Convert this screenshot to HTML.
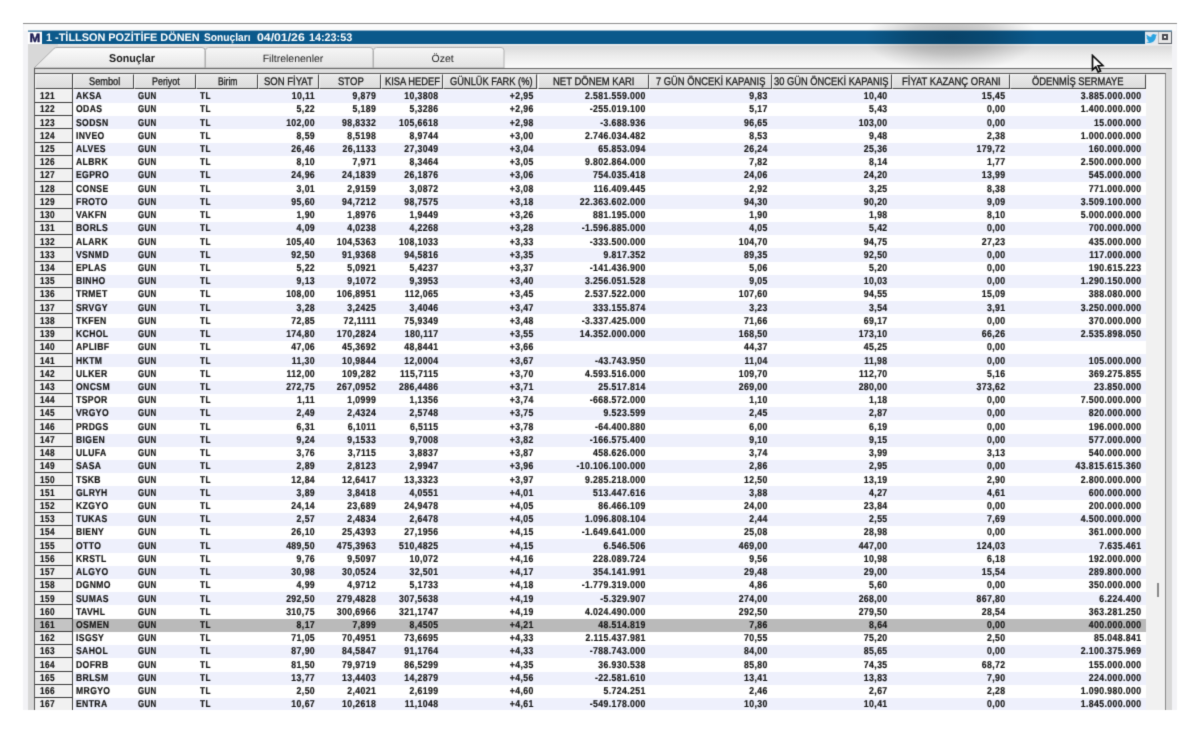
<!DOCTYPE html>
<html lang="tr"><head><meta charset="utf-8"><title>TİLLSON POZİTİFE DÖNEN Sonuçları</title>
<style>

html,body{margin:0;padding:0;background:#fff;}
body{width:1200px;height:733px;position:relative;overflow:hidden;font-family:"Liberation Sans",sans-serif;text-rendering:geometricPrecision;}
#app{position:absolute;left:0;top:0;width:1200px;height:733px;overflow:hidden;background:#fff;filter:url(#soft);}
.abs{position:absolute;}
.r{position:absolute;left:73px;width:1073px;}
.r.a{background:linear-gradient(90deg,#fbfbff 0,#fbfbff 1.500px,#eef0fc 1.500px);}
.r.b{background:#ffffff;}
.r.sel{background:#bababa;}
.c{position:absolute;top:0;height:100%;font-weight:bold;font-size:10px;color:#141414;-webkit-text-stroke:0.2px #141414;letter-spacing:0.45px;white-space:nowrap;line-height:13.24px;}
.r.d1 .c{top:1px;}
.n.d1 span{top:0.5px;}
.c.l{text-align:left;transform:scaleX(0.86);transform-origin:0 50%;}
.c.l.g{transform:scaleX(0.79);}
.c.l.t{transform:scaleX(0.82);}
.c.rt{text-align:right;transform:scaleX(0.87);transform-origin:100% 50%;}
.n{position:absolute;left:35px;width:37px;background:#f1f1f1;border-bottom:1px solid #363636;box-sizing:border-box;font-weight:bold;font-size:10px;color:#141414;-webkit-text-stroke:0.2px #141414;letter-spacing:0.45px;line-height:13.24px;padding-left:4.8px;}
.n span{display:inline-block;position:relative;top:-0.5px;transform:scaleX(0.825);transform-origin:0 50%;}
.n.sel{background:#c4c4c4;}
.h{position:absolute;top:74px;height:15px;box-sizing:border-box;background:linear-gradient(#e9e9e9,#dcdcdc);border-right:1px solid #444;border-bottom:1px solid #444;border-top:1px solid #fafafa;border-left:1px solid #fafafa;font-size:11px;color:#222;text-align:left;line-height:14px;white-space:nowrap;overflow:hidden;}
.h span{position:absolute;top:-0.2px;-webkit-text-stroke:0.3px #181818;color:#181818;left:0;white-space:nowrap;transform-origin:0 50%;}

</style></head><body>
<svg width="0" height="0" style="position:absolute;left:0;top:0"><filter id="soft" x="0" y="0" width="100%" height="100%" color-interpolation-filters="sRGB"><feConvolveMatrix order="3" kernelMatrix="0.0169 0.0962 0.0169 0.0962 0.5476 0.0962 0.0169 0.0962 0.0169" divisor="1" edgeMode="duplicate" preserveAlpha="true"/></filter></svg>
<div id="app">
<div class="abs" style="left:23px;top:23px;width:1154px;height:688px;background:#f3f3f6;"></div>
<div class="abs" style="left:23px;top:23px;width:1154px;height:1px;background:#8c8c8c;"></div>
<div class="abs" style="left:24px;top:24px;width:1152px;height:7px;background:#fafafa;"></div>
<div class="abs" style="left:28px;top:44px;width:1144px;height:667px;background:#d8d8d8;"></div>
<div class="abs" style="left:28px;top:44px;width:1144px;height:24px;background:linear-gradient(#d6d6d6,#ececec 50%,#fafafa);"></div>
<div class="abs" style="left:28px;top:44px;width:1144px;height:2px;background:linear-gradient(#f0f0f0,#e2e2e2);"></div>
<div class="abs" style="left:28px;top:31px;width:1144px;height:13px;background:#e4e8ee;"></div>
<div class="abs" style="left:42px;top:31px;width:1103px;height:13px;background:#0b598b;"></div>
<div class="abs" style="left:28px;top:30px;width:1144px;height:1px;background:#8fb1c8;"></div>
<div class="abs" style="left:28px;top:31px;width:14px;height:13px;background:#fff;"></div>
<div class="abs" style="left:28px;top:31px;width:14px;height:1px;background:#5d8fb0;"></div>
<div class="abs" style="left:28px;top:31px;width:14px;height:13px;line-height:15px;text-align:center;font-weight:bold;font-size:12px;color:#1b1b52;-webkit-text-stroke:0.4px #1b1b52;transform:scaleX(1.08);">M</div>
<div class="abs" id="title" style="left:0;top:31px;height:13px;width:400px;line-height:14px;font-weight:bold;font-size:11px;color:#fff;white-space:pre;"><span style="position:absolute;top:0;left:45.60px;transform:scaleX(0.990);transform-origin:0 50%;">1 -TİLLSON POZİTİFE DÖNEN</span> <span style="position:absolute;top:0;left:203.50px;transform:scaleX(0.928);transform-origin:0 50%;">Sonuçları</span> <span style="position:absolute;top:0;left:257.10px;transform:scaleX(1.114);transform-origin:0 50%;">04/01/26</span> <span style="position:absolute;top:0;left:308.60px;transform:scaleX(0.980);transform-origin:0 50%;">14:23:53</span> </div>
<svg class="abs" style="left:1146px;top:33.500px;" width="11" height="9.200" viewBox="0 0 24 20"><path fill="#2aa3e0" d="M24 2.4c-.9.4-1.800.7-2.800.8 1-.6 1.800-1.600 2.200-2.700-1 .6-2 1-3.100 1.200C19.400.7 18.100 0 16.600 0c-2.700 0-4.900 2.200-4.900 4.900 0 .4 0 .8.100 1.100C7.700 5.800 4.100 3.900 1.700.9 1.200 1.700 1 2.500 1 3.400c0 1.700.9 3.200 2.200 4.100-.8 0-1.600-.2-2.200-.6v.1c0 2.400 1.700 4.400 3.900 4.800-.4.100-.8.200-1.300.2-.3 0-.6 0-.9-.1.600 2 2.400 3.400 4.600 3.400-1.700 1.300-3.800 2.100-6.100 2.100-.4 0-.8 0-1.200-.1 2.200 1.400 4.800 2.200 7.500 2.200 9.100 0 14-7.500 14-14v-.6c1-.7 1.800-1.600 2.500-2.500z"/></svg>
<div class="abs" style="left:1145px;top:31px;width:27px;height:1px;background:#5d8199;"></div>
<div class="abs" style="left:1158px;top:32px;width:14px;height:12px;background:#e6e6e6;border-right:1px solid #5a6068;border-bottom:1px solid #5a6068;border-left:1px solid #b8b8b8;box-sizing:border-box;"></div>
<div class="abs" style="left:1162px;top:34px;width:6px;height:6px;border:2px solid #4a4a50;box-sizing:border-box;background:#fff;"></div>
<svg class="abs" style="left:28px;top:44px;" width="1144" height="26" viewBox="0 0 1144 26">
<defs><linearGradient id="tg" x1="0" y1="0" x2="0" y2="1"><stop offset="0" stop-color="#fbfbfb"/><stop offset="1" stop-color="#e6e6e6"/></linearGradient><linearGradient id="tg2" x1="0" y1="0" x2="0" y2="1"><stop offset="0" stop-color="#f6f6f6"/><stop offset="1" stop-color="#e2e2e2"/></linearGradient></defs>
<path d="M0 0 L30 0 L30 4 L26 4 L6 24 L0 24 Z" fill="#d8d8d8"/>
<path d="M6 24 L26 4.500 Q27 3.500 29 3.500 L174 3.500 Q177 3.500 177 6.500 L177 24 Z" fill="url(#tg)" stroke="#a8a8a8" stroke-width="1"/>
<path d="M177.500 24 L177.500 6.500 Q177.500 3.500 180.500 3.500 L342 3.500 Q345 3.500 345 6.500 L345 24 Z" fill="url(#tg2)" stroke="#b0b0b0" stroke-width="1"/>
<path d="M345.500 24 L345.500 6.500 Q345.500 3.500 348.500 3.500 L473 3.500 Q476 3.500 476 6.500 L476 24 Z" fill="url(#tg2)" stroke="#b0b0b0" stroke-width="1"/>
<text x="104" y="18" text-anchor="middle" font-family="Liberation Sans, sans-serif" font-weight="bold" font-size="11.500" fill="#1a1a1a" textLength="45.800" lengthAdjust="spacingAndGlyphs">Sonuçlar</text>
<text x="265" y="18" text-anchor="middle" font-family="Liberation Sans, sans-serif" font-size="10.500" fill="#1e1e1e">Filtrelenenler</text>
<text x="414.7" y="18" text-anchor="middle" font-family="Liberation Sans, sans-serif" font-size="10.500" fill="#1e1e1e">Özet</text>
</svg>
<div class="abs" style="left:34px;top:68px;width:1138px;height:1px;background:#666;"></div>
<div class="abs" style="left:34px;top:69px;width:1132px;height:4px;background:#dedede;"></div>
<div class="abs" style="left:34px;top:68px;width:1px;height:6px;background:#555;"></div>
<div class="abs" style="left:34px;top:73px;width:1132px;height:640px;background:#f7f7f7;border-left:1px solid #555;border-top:1px solid #555;border-right:1px solid #888;box-sizing:border-box;"></div>
<div class="abs" style="left:35px;top:74px;width:1111px;height:15px;background:#e2e2e2;"></div>
<div class="abs" style="left:73px;top:89px;width:1073px;height:624px;background:#fff;"></div>
<div class="h" id="h0" style="left:35.00px;width:37.50px;"></div>
<div class="h" id="h1" style="left:72.50px;width:61.75px;"><span style="left:15.25px;transform:scaleX(0.838);">Sembol</span></div>
<div class="h" id="h2" style="left:134.25px;width:61.75px;"><span style="left:16.50px;transform:scaleX(0.810);">Periyot</span></div>
<div class="h" id="h3" style="left:196.00px;width:61.70px;"><span style="left:20.50px;transform:scaleX(0.778);">Birim</span></div>
<div class="h" id="h4" style="left:257.70px;width:61.60px;"><span style="left:5.05px;transform:scaleX(0.864);">SON FİYAT</span></div>
<div class="h" id="h5" style="left:319.30px;width:61.70px;"><span style="left:17.70px;transform:scaleX(0.865);">STOP</span></div>
<div class="h" id="h6" style="left:381.00px;width:61.90px;"><span style="left:2.50px;transform:scaleX(0.849);">KISA HEDEF</span></div>
<div class="h" id="h7" style="left:442.90px;width:94.60px;"><span style="left:6.10px;transform:scaleX(0.844);">GÜNLÜK FARK (%)</span></div>
<div class="h" id="h8" style="left:537.50px;width:111.00px;"><span style="left:14.50px;transform:scaleX(0.862);">NET DÖNEM KARI</span></div>
<div class="h" id="h9" style="left:648.50px;width:123.20px;"><span style="left:6.00px;transform:scaleX(0.850);">7 GÜN ÖNCEKİ KAPANIŞ</span></div>
<div class="h" id="h10" style="left:771.70px;width:120.10px;"><span style="left:1.55px;transform:scaleX(0.849);">30 GÜN ÖNCEKİ KAPANIŞ</span></div>
<div class="h" id="h11" style="left:891.80px;width:118.00px;"><span style="left:9.10px;transform:scaleX(0.859);">FİYAT KAZANÇ ORANI</span></div>
<div class="h" id="h12" style="left:1009.80px;width:136.00px;"><span style="left:21.70px;transform:scaleX(0.852);">ÖDENMİŞ SERMAYE</span></div>
<div class="n" style="top:90.00px;height:13.00px;"><span>121</span></div>
<div class="r a" style="top:90.00px;height:13.00px;"><div class="c l" style="left:3.10px;width:58.15px;">AKSA</div><div class="c l g" style="left:64.85px;width:58.15px;">GUN</div><div class="c l t" style="left:126.60px;width:58.10px;">TL</div><div class="c rt" style="left:184.70px;width:57.10px;">10,11</div><div class="c rt" style="left:246.30px;width:57.20px;">9,879</div><div class="c rt" style="left:308.00px;width:57.40px;">10,3808</div><div class="c rt" style="left:369.90px;width:90.80px;">+2,95</div><div class="c rt" style="left:464.50px;width:107.70px;">2.581.559.000</div><div class="c rt" style="left:575.50px;width:118.70px;">9,83</div><div class="c rt" style="left:698.70px;width:115.60px;">10,40</div><div class="c rt" style="left:818.80px;width:113.50px;">15,45</div><div class="c rt" style="left:936.80px;width:131.50px;">3.885.000.000</div></div>
<div class="n" style="top:103.00px;height:13.00px;"><span>122</span></div>
<div class="r b" style="top:103.00px;height:13.00px;"><div class="c l" style="left:3.10px;width:58.15px;">ODAS</div><div class="c l g" style="left:64.85px;width:58.15px;">GUN</div><div class="c l t" style="left:126.60px;width:58.10px;">TL</div><div class="c rt" style="left:184.70px;width:57.10px;">5,22</div><div class="c rt" style="left:246.30px;width:57.20px;">5,189</div><div class="c rt" style="left:308.00px;width:57.40px;">5,3286</div><div class="c rt" style="left:369.90px;width:90.80px;">+2,96</div><div class="c rt" style="left:464.50px;width:107.70px;">-255.019.100</div><div class="c rt" style="left:575.50px;width:118.70px;">5,17</div><div class="c rt" style="left:698.70px;width:115.60px;">5,43</div><div class="c rt" style="left:818.80px;width:113.50px;">0,00</div><div class="c rt" style="left:936.80px;width:131.50px;">1.400.000.000</div></div>
<div class="n d1" style="top:116.00px;height:13.00px;"><span>123</span></div>
<div class="r a d1" style="top:116.00px;height:13.00px;"><div class="c l" style="left:3.10px;width:58.15px;">SODSN</div><div class="c l g" style="left:64.85px;width:58.15px;">GUN</div><div class="c l t" style="left:126.60px;width:58.10px;">TL</div><div class="c rt" style="left:184.70px;width:57.10px;">102,00</div><div class="c rt" style="left:246.30px;width:57.20px;">98,8332</div><div class="c rt" style="left:308.00px;width:57.40px;">105,6618</div><div class="c rt" style="left:369.90px;width:90.80px;">+2,98</div><div class="c rt" style="left:464.50px;width:107.70px;">-3.688.936</div><div class="c rt" style="left:575.50px;width:118.70px;">96,65</div><div class="c rt" style="left:698.70px;width:115.60px;">103,00</div><div class="c rt" style="left:818.80px;width:113.50px;">0,00</div><div class="c rt" style="left:936.80px;width:131.50px;">15.000.000</div></div>
<div class="n d1" style="top:129.00px;height:14.00px;"><span>124</span></div>
<div class="r b d1" style="top:129.00px;height:14.00px;"><div class="c l" style="left:3.10px;width:58.15px;">INVEO</div><div class="c l g" style="left:64.85px;width:58.15px;">GUN</div><div class="c l t" style="left:126.60px;width:58.10px;">TL</div><div class="c rt" style="left:184.70px;width:57.10px;">8,59</div><div class="c rt" style="left:246.30px;width:57.20px;">8,5198</div><div class="c rt" style="left:308.00px;width:57.40px;">8,9744</div><div class="c rt" style="left:369.90px;width:90.80px;">+3,00</div><div class="c rt" style="left:464.50px;width:107.70px;">2.746.034.482</div><div class="c rt" style="left:575.50px;width:118.70px;">8,53</div><div class="c rt" style="left:698.70px;width:115.60px;">9,48</div><div class="c rt" style="left:818.80px;width:113.50px;">2,38</div><div class="c rt" style="left:936.80px;width:131.50px;">1.000.000.000</div></div>
<div class="n" style="top:143.00px;height:13.00px;"><span>125</span></div>
<div class="r a" style="top:143.00px;height:13.00px;"><div class="c l" style="left:3.10px;width:58.15px;">ALVES</div><div class="c l g" style="left:64.85px;width:58.15px;">GUN</div><div class="c l t" style="left:126.60px;width:58.10px;">TL</div><div class="c rt" style="left:184.70px;width:57.10px;">26,46</div><div class="c rt" style="left:246.30px;width:57.20px;">26,1133</div><div class="c rt" style="left:308.00px;width:57.40px;">27,3049</div><div class="c rt" style="left:369.90px;width:90.80px;">+3,04</div><div class="c rt" style="left:464.50px;width:107.70px;">65.853.094</div><div class="c rt" style="left:575.50px;width:118.70px;">26,24</div><div class="c rt" style="left:698.70px;width:115.60px;">25,36</div><div class="c rt" style="left:818.80px;width:113.50px;">179,72</div><div class="c rt" style="left:936.80px;width:131.50px;">160.000.000</div></div>
<div class="n" style="top:156.00px;height:13.00px;"><span>126</span></div>
<div class="r b" style="top:156.00px;height:13.00px;"><div class="c l" style="left:3.10px;width:58.15px;">ALBRK</div><div class="c l g" style="left:64.85px;width:58.15px;">GUN</div><div class="c l t" style="left:126.60px;width:58.10px;">TL</div><div class="c rt" style="left:184.70px;width:57.10px;">8,10</div><div class="c rt" style="left:246.30px;width:57.20px;">7,971</div><div class="c rt" style="left:308.00px;width:57.40px;">8,3464</div><div class="c rt" style="left:369.90px;width:90.80px;">+3,05</div><div class="c rt" style="left:464.50px;width:107.70px;">9.802.864.000</div><div class="c rt" style="left:575.50px;width:118.70px;">7,82</div><div class="c rt" style="left:698.70px;width:115.60px;">8,14</div><div class="c rt" style="left:818.80px;width:113.50px;">1,77</div><div class="c rt" style="left:936.80px;width:131.50px;">2.500.000.000</div></div>
<div class="n" style="top:169.00px;height:13.00px;"><span>127</span></div>
<div class="r a" style="top:169.00px;height:13.00px;"><div class="c l" style="left:3.10px;width:58.15px;">EGPRO</div><div class="c l g" style="left:64.85px;width:58.15px;">GUN</div><div class="c l t" style="left:126.60px;width:58.10px;">TL</div><div class="c rt" style="left:184.70px;width:57.10px;">24,96</div><div class="c rt" style="left:246.30px;width:57.20px;">24,1839</div><div class="c rt" style="left:308.00px;width:57.40px;">26,1876</div><div class="c rt" style="left:369.90px;width:90.80px;">+3,06</div><div class="c rt" style="left:464.50px;width:107.70px;">754.035.418</div><div class="c rt" style="left:575.50px;width:118.70px;">24,06</div><div class="c rt" style="left:698.70px;width:115.60px;">24,20</div><div class="c rt" style="left:818.80px;width:113.50px;">13,99</div><div class="c rt" style="left:936.80px;width:131.50px;">545.000.000</div></div>
<div class="n d1" style="top:182.00px;height:13.00px;"><span>128</span></div>
<div class="r b d1" style="top:182.00px;height:13.00px;"><div class="c l" style="left:3.10px;width:58.15px;">CONSE</div><div class="c l g" style="left:64.85px;width:58.15px;">GUN</div><div class="c l t" style="left:126.60px;width:58.10px;">TL</div><div class="c rt" style="left:184.70px;width:57.10px;">3,01</div><div class="c rt" style="left:246.30px;width:57.20px;">2,9159</div><div class="c rt" style="left:308.00px;width:57.40px;">3,0872</div><div class="c rt" style="left:369.90px;width:90.80px;">+3,08</div><div class="c rt" style="left:464.50px;width:107.70px;">116.409.445</div><div class="c rt" style="left:575.50px;width:118.70px;">2,92</div><div class="c rt" style="left:698.70px;width:115.60px;">3,25</div><div class="c rt" style="left:818.80px;width:113.50px;">8,38</div><div class="c rt" style="left:936.80px;width:131.50px;">771.000.000</div></div>
<div class="n d1" style="top:195.00px;height:14.00px;"><span>129</span></div>
<div class="r a d1" style="top:195.00px;height:14.00px;"><div class="c l" style="left:3.10px;width:58.15px;">FROTO</div><div class="c l g" style="left:64.85px;width:58.15px;">GUN</div><div class="c l t" style="left:126.60px;width:58.10px;">TL</div><div class="c rt" style="left:184.70px;width:57.10px;">95,60</div><div class="c rt" style="left:246.30px;width:57.20px;">94,7212</div><div class="c rt" style="left:308.00px;width:57.40px;">98,7575</div><div class="c rt" style="left:369.90px;width:90.80px;">+3,18</div><div class="c rt" style="left:464.50px;width:107.70px;">22.363.602.000</div><div class="c rt" style="left:575.50px;width:118.70px;">94,30</div><div class="c rt" style="left:698.70px;width:115.60px;">90,20</div><div class="c rt" style="left:818.80px;width:113.50px;">9,09</div><div class="c rt" style="left:936.80px;width:131.50px;">3.509.100.000</div></div>
<div class="n" style="top:209.00px;height:13.00px;"><span>130</span></div>
<div class="r b" style="top:209.00px;height:13.00px;"><div class="c l" style="left:3.10px;width:58.15px;">VAKFN</div><div class="c l g" style="left:64.85px;width:58.15px;">GUN</div><div class="c l t" style="left:126.60px;width:58.10px;">TL</div><div class="c rt" style="left:184.70px;width:57.10px;">1,90</div><div class="c rt" style="left:246.30px;width:57.20px;">1,8976</div><div class="c rt" style="left:308.00px;width:57.40px;">1,9449</div><div class="c rt" style="left:369.90px;width:90.80px;">+3,26</div><div class="c rt" style="left:464.50px;width:107.70px;">881.195.000</div><div class="c rt" style="left:575.50px;width:118.70px;">1,90</div><div class="c rt" style="left:698.70px;width:115.60px;">1,98</div><div class="c rt" style="left:818.80px;width:113.50px;">8,10</div><div class="c rt" style="left:936.80px;width:131.50px;">5.000.000.000</div></div>
<div class="n" style="top:222.00px;height:13.00px;"><span>131</span></div>
<div class="r a" style="top:222.00px;height:13.00px;"><div class="c l" style="left:3.10px;width:58.15px;">BORLS</div><div class="c l g" style="left:64.85px;width:58.15px;">GUN</div><div class="c l t" style="left:126.60px;width:58.10px;">TL</div><div class="c rt" style="left:184.70px;width:57.10px;">4,09</div><div class="c rt" style="left:246.30px;width:57.20px;">4,0238</div><div class="c rt" style="left:308.00px;width:57.40px;">4,2268</div><div class="c rt" style="left:369.90px;width:90.80px;">+3,28</div><div class="c rt" style="left:464.50px;width:107.70px;">-1.596.885.000</div><div class="c rt" style="left:575.50px;width:118.70px;">4,05</div><div class="c rt" style="left:698.70px;width:115.60px;">5,42</div><div class="c rt" style="left:818.80px;width:113.50px;">0,00</div><div class="c rt" style="left:936.80px;width:131.50px;">700.000.000</div></div>
<div class="n d1" style="top:235.00px;height:13.00px;"><span>132</span></div>
<div class="r b d1" style="top:235.00px;height:13.00px;"><div class="c l" style="left:3.10px;width:58.15px;">ALARK</div><div class="c l g" style="left:64.85px;width:58.15px;">GUN</div><div class="c l t" style="left:126.60px;width:58.10px;">TL</div><div class="c rt" style="left:184.70px;width:57.10px;">105,40</div><div class="c rt" style="left:246.30px;width:57.20px;">104,5363</div><div class="c rt" style="left:308.00px;width:57.40px;">108,1033</div><div class="c rt" style="left:369.90px;width:90.80px;">+3,33</div><div class="c rt" style="left:464.50px;width:107.70px;">-333.500.000</div><div class="c rt" style="left:575.50px;width:118.70px;">104,70</div><div class="c rt" style="left:698.70px;width:115.60px;">94,75</div><div class="c rt" style="left:818.80px;width:113.50px;">27,23</div><div class="c rt" style="left:936.80px;width:131.50px;">435.000.000</div></div>
<div class="n d1" style="top:248.00px;height:14.00px;"><span>133</span></div>
<div class="r a d1" style="top:248.00px;height:14.00px;"><div class="c l" style="left:3.10px;width:58.15px;">VSNMD</div><div class="c l g" style="left:64.85px;width:58.15px;">GUN</div><div class="c l t" style="left:126.60px;width:58.10px;">TL</div><div class="c rt" style="left:184.70px;width:57.10px;">92,50</div><div class="c rt" style="left:246.30px;width:57.20px;">91,9368</div><div class="c rt" style="left:308.00px;width:57.40px;">94,5816</div><div class="c rt" style="left:369.90px;width:90.80px;">+3,35</div><div class="c rt" style="left:464.50px;width:107.70px;">9.817.352</div><div class="c rt" style="left:575.50px;width:118.70px;">89,35</div><div class="c rt" style="left:698.70px;width:115.60px;">92,50</div><div class="c rt" style="left:818.80px;width:113.50px;">0,00</div><div class="c rt" style="left:936.80px;width:131.50px;">117.000.000</div></div>
<div class="n" style="top:262.00px;height:13.00px;"><span>134</span></div>
<div class="r b" style="top:262.00px;height:13.00px;"><div class="c l" style="left:3.10px;width:58.15px;">EPLAS</div><div class="c l g" style="left:64.85px;width:58.15px;">GUN</div><div class="c l t" style="left:126.60px;width:58.10px;">TL</div><div class="c rt" style="left:184.70px;width:57.10px;">5,22</div><div class="c rt" style="left:246.30px;width:57.20px;">5,0921</div><div class="c rt" style="left:308.00px;width:57.40px;">5,4237</div><div class="c rt" style="left:369.90px;width:90.80px;">+3,37</div><div class="c rt" style="left:464.50px;width:107.70px;">-141.436.900</div><div class="c rt" style="left:575.50px;width:118.70px;">5,06</div><div class="c rt" style="left:698.70px;width:115.60px;">5,20</div><div class="c rt" style="left:818.80px;width:113.50px;">0,00</div><div class="c rt" style="left:936.80px;width:131.50px;">190.615.223</div></div>
<div class="n" style="top:275.00px;height:13.00px;"><span>135</span></div>
<div class="r a" style="top:275.00px;height:13.00px;"><div class="c l" style="left:3.10px;width:58.15px;">BINHO</div><div class="c l g" style="left:64.85px;width:58.15px;">GUN</div><div class="c l t" style="left:126.60px;width:58.10px;">TL</div><div class="c rt" style="left:184.70px;width:57.10px;">9,13</div><div class="c rt" style="left:246.30px;width:57.20px;">9,1072</div><div class="c rt" style="left:308.00px;width:57.40px;">9,3953</div><div class="c rt" style="left:369.90px;width:90.80px;">+3,40</div><div class="c rt" style="left:464.50px;width:107.70px;">3.256.051.528</div><div class="c rt" style="left:575.50px;width:118.70px;">9,05</div><div class="c rt" style="left:698.70px;width:115.60px;">10,03</div><div class="c rt" style="left:818.80px;width:113.50px;">0,00</div><div class="c rt" style="left:936.80px;width:131.50px;">1.290.150.000</div></div>
<div class="n" style="top:288.00px;height:13.00px;"><span>136</span></div>
<div class="r b" style="top:288.00px;height:13.00px;"><div class="c l" style="left:3.10px;width:58.15px;">TRMET</div><div class="c l g" style="left:64.85px;width:58.15px;">GUN</div><div class="c l t" style="left:126.60px;width:58.10px;">TL</div><div class="c rt" style="left:184.70px;width:57.10px;">108,00</div><div class="c rt" style="left:246.30px;width:57.20px;">106,8951</div><div class="c rt" style="left:308.00px;width:57.40px;">112,065</div><div class="c rt" style="left:369.90px;width:90.80px;">+3,45</div><div class="c rt" style="left:464.50px;width:107.70px;">2.537.522.000</div><div class="c rt" style="left:575.50px;width:118.70px;">107,60</div><div class="c rt" style="left:698.70px;width:115.60px;">94,55</div><div class="c rt" style="left:818.80px;width:113.50px;">15,09</div><div class="c rt" style="left:936.80px;width:131.50px;">388.080.000</div></div>
<div class="n d1" style="top:301.00px;height:13.00px;"><span>137</span></div>
<div class="r a d1" style="top:301.00px;height:13.00px;"><div class="c l" style="left:3.10px;width:58.15px;">SRVGY</div><div class="c l g" style="left:64.85px;width:58.15px;">GUN</div><div class="c l t" style="left:126.60px;width:58.10px;">TL</div><div class="c rt" style="left:184.70px;width:57.10px;">3,28</div><div class="c rt" style="left:246.30px;width:57.20px;">3,2425</div><div class="c rt" style="left:308.00px;width:57.40px;">3,4046</div><div class="c rt" style="left:369.90px;width:90.80px;">+3,47</div><div class="c rt" style="left:464.50px;width:107.70px;">333.155.874</div><div class="c rt" style="left:575.50px;width:118.70px;">3,23</div><div class="c rt" style="left:698.70px;width:115.60px;">3,54</div><div class="c rt" style="left:818.80px;width:113.50px;">3,91</div><div class="c rt" style="left:936.80px;width:131.50px;">3.250.000.000</div></div>
<div class="n d1" style="top:314.00px;height:14.00px;"><span>138</span></div>
<div class="r b d1" style="top:314.00px;height:14.00px;"><div class="c l" style="left:3.10px;width:58.15px;">TKFEN</div><div class="c l g" style="left:64.85px;width:58.15px;">GUN</div><div class="c l t" style="left:126.60px;width:58.10px;">TL</div><div class="c rt" style="left:184.70px;width:57.10px;">72,85</div><div class="c rt" style="left:246.30px;width:57.20px;">72,1111</div><div class="c rt" style="left:308.00px;width:57.40px;">75,9349</div><div class="c rt" style="left:369.90px;width:90.80px;">+3,48</div><div class="c rt" style="left:464.50px;width:107.70px;">-3.337.425.000</div><div class="c rt" style="left:575.50px;width:118.70px;">71,66</div><div class="c rt" style="left:698.70px;width:115.60px;">69,17</div><div class="c rt" style="left:818.80px;width:113.50px;">0,00</div><div class="c rt" style="left:936.80px;width:131.50px;">370.000.000</div></div>
<div class="n" style="top:328.00px;height:13.00px;"><span>139</span></div>
<div class="r a" style="top:328.00px;height:13.00px;"><div class="c l" style="left:3.10px;width:58.15px;">KCHOL</div><div class="c l g" style="left:64.85px;width:58.15px;">GUN</div><div class="c l t" style="left:126.60px;width:58.10px;">TL</div><div class="c rt" style="left:184.70px;width:57.10px;">174,80</div><div class="c rt" style="left:246.30px;width:57.20px;">170,2824</div><div class="c rt" style="left:308.00px;width:57.40px;">180,117</div><div class="c rt" style="left:369.90px;width:90.80px;">+3,55</div><div class="c rt" style="left:464.50px;width:107.70px;">14.352.000.000</div><div class="c rt" style="left:575.50px;width:118.70px;">168,50</div><div class="c rt" style="left:698.70px;width:115.60px;">173,10</div><div class="c rt" style="left:818.80px;width:113.50px;">66,26</div><div class="c rt" style="left:936.80px;width:131.50px;">2.535.898.050</div></div>
<div class="n" style="top:341.00px;height:13.00px;"><span>140</span></div>
<div class="r b" style="top:341.00px;height:13.00px;"><div class="c l" style="left:3.10px;width:58.15px;">APLIBF</div><div class="c l g" style="left:64.85px;width:58.15px;">GUN</div><div class="c l t" style="left:126.60px;width:58.10px;">TL</div><div class="c rt" style="left:184.70px;width:57.10px;">47,06</div><div class="c rt" style="left:246.30px;width:57.20px;">45,3692</div><div class="c rt" style="left:308.00px;width:57.40px;">48,8441</div><div class="c rt" style="left:369.90px;width:90.80px;">+3,66</div><div class="c rt" style="left:464.50px;width:107.70px;"></div><div class="c rt" style="left:575.50px;width:118.70px;">44,37</div><div class="c rt" style="left:698.70px;width:115.60px;">45,25</div><div class="c rt" style="left:818.80px;width:113.50px;">0,00</div><div class="c rt" style="left:936.80px;width:131.50px;"></div></div>
<div class="n d1" style="top:354.00px;height:13.00px;"><span>141</span></div>
<div class="r a d1" style="top:354.00px;height:13.00px;"><div class="c l" style="left:3.10px;width:58.15px;">HKTM</div><div class="c l g" style="left:64.85px;width:58.15px;">GUN</div><div class="c l t" style="left:126.60px;width:58.10px;">TL</div><div class="c rt" style="left:184.70px;width:57.10px;">11,30</div><div class="c rt" style="left:246.30px;width:57.20px;">10,9844</div><div class="c rt" style="left:308.00px;width:57.40px;">12,0004</div><div class="c rt" style="left:369.90px;width:90.80px;">+3,67</div><div class="c rt" style="left:464.50px;width:107.70px;">-43.743.950</div><div class="c rt" style="left:575.50px;width:118.70px;">11,04</div><div class="c rt" style="left:698.70px;width:115.60px;">11,98</div><div class="c rt" style="left:818.80px;width:113.50px;">0,00</div><div class="c rt" style="left:936.80px;width:131.50px;">105.000.000</div></div>
<div class="n d1" style="top:367.00px;height:14.00px;"><span>142</span></div>
<div class="r b d1" style="top:367.00px;height:14.00px;"><div class="c l" style="left:3.10px;width:58.15px;">ULKER</div><div class="c l g" style="left:64.85px;width:58.15px;">GUN</div><div class="c l t" style="left:126.60px;width:58.10px;">TL</div><div class="c rt" style="left:184.70px;width:57.10px;">112,00</div><div class="c rt" style="left:246.30px;width:57.20px;">109,282</div><div class="c rt" style="left:308.00px;width:57.40px;">115,7115</div><div class="c rt" style="left:369.90px;width:90.80px;">+3,70</div><div class="c rt" style="left:464.50px;width:107.70px;">4.593.516.000</div><div class="c rt" style="left:575.50px;width:118.70px;">109,70</div><div class="c rt" style="left:698.70px;width:115.60px;">112,70</div><div class="c rt" style="left:818.80px;width:113.50px;">5,16</div><div class="c rt" style="left:936.80px;width:131.50px;">369.275.855</div></div>
<div class="n" style="top:381.00px;height:13.00px;"><span>143</span></div>
<div class="r a" style="top:381.00px;height:13.00px;"><div class="c l" style="left:3.10px;width:58.15px;">ONCSM</div><div class="c l g" style="left:64.85px;width:58.15px;">GUN</div><div class="c l t" style="left:126.60px;width:58.10px;">TL</div><div class="c rt" style="left:184.70px;width:57.10px;">272,75</div><div class="c rt" style="left:246.30px;width:57.20px;">267,0952</div><div class="c rt" style="left:308.00px;width:57.40px;">286,4486</div><div class="c rt" style="left:369.90px;width:90.80px;">+3,71</div><div class="c rt" style="left:464.50px;width:107.70px;">25.517.814</div><div class="c rt" style="left:575.50px;width:118.70px;">269,00</div><div class="c rt" style="left:698.70px;width:115.60px;">280,00</div><div class="c rt" style="left:818.80px;width:113.50px;">373,62</div><div class="c rt" style="left:936.80px;width:131.50px;">23.850.000</div></div>
<div class="n" style="top:394.00px;height:13.00px;"><span>144</span></div>
<div class="r b" style="top:394.00px;height:13.00px;"><div class="c l" style="left:3.10px;width:58.15px;">TSPOR</div><div class="c l g" style="left:64.85px;width:58.15px;">GUN</div><div class="c l t" style="left:126.60px;width:58.10px;">TL</div><div class="c rt" style="left:184.70px;width:57.10px;">1,11</div><div class="c rt" style="left:246.30px;width:57.20px;">1,0999</div><div class="c rt" style="left:308.00px;width:57.40px;">1,1356</div><div class="c rt" style="left:369.90px;width:90.80px;">+3,74</div><div class="c rt" style="left:464.50px;width:107.70px;">-668.572.000</div><div class="c rt" style="left:575.50px;width:118.70px;">1,10</div><div class="c rt" style="left:698.70px;width:115.60px;">1,18</div><div class="c rt" style="left:818.80px;width:113.50px;">0,00</div><div class="c rt" style="left:936.80px;width:131.50px;">7.500.000.000</div></div>
<div class="n" style="top:407.00px;height:13.00px;"><span>145</span></div>
<div class="r a" style="top:407.00px;height:13.00px;"><div class="c l" style="left:3.10px;width:58.15px;">VRGYO</div><div class="c l g" style="left:64.85px;width:58.15px;">GUN</div><div class="c l t" style="left:126.60px;width:58.10px;">TL</div><div class="c rt" style="left:184.70px;width:57.10px;">2,49</div><div class="c rt" style="left:246.30px;width:57.20px;">2,4324</div><div class="c rt" style="left:308.00px;width:57.40px;">2,5748</div><div class="c rt" style="left:369.90px;width:90.80px;">+3,75</div><div class="c rt" style="left:464.50px;width:107.70px;">9.523.599</div><div class="c rt" style="left:575.50px;width:118.70px;">2,45</div><div class="c rt" style="left:698.70px;width:115.60px;">2,87</div><div class="c rt" style="left:818.80px;width:113.50px;">0,00</div><div class="c rt" style="left:936.80px;width:131.50px;">820.000.000</div></div>
<div class="n d1" style="top:420.00px;height:14.00px;"><span>146</span></div>
<div class="r b d1" style="top:420.00px;height:14.00px;"><div class="c l" style="left:3.10px;width:58.15px;">PRDGS</div><div class="c l g" style="left:64.85px;width:58.15px;">GUN</div><div class="c l t" style="left:126.60px;width:58.10px;">TL</div><div class="c rt" style="left:184.70px;width:57.10px;">6,31</div><div class="c rt" style="left:246.30px;width:57.20px;">6,1011</div><div class="c rt" style="left:308.00px;width:57.40px;">6,5115</div><div class="c rt" style="left:369.90px;width:90.80px;">+3,78</div><div class="c rt" style="left:464.50px;width:107.70px;">-64.400.880</div><div class="c rt" style="left:575.50px;width:118.70px;">6,00</div><div class="c rt" style="left:698.70px;width:115.60px;">6,19</div><div class="c rt" style="left:818.80px;width:113.50px;">0,00</div><div class="c rt" style="left:936.80px;width:131.50px;">196.000.000</div></div>
<div class="n" style="top:434.00px;height:13.00px;"><span>147</span></div>
<div class="r a" style="top:434.00px;height:13.00px;"><div class="c l" style="left:3.10px;width:58.15px;">BIGEN</div><div class="c l g" style="left:64.85px;width:58.15px;">GUN</div><div class="c l t" style="left:126.60px;width:58.10px;">TL</div><div class="c rt" style="left:184.70px;width:57.10px;">9,24</div><div class="c rt" style="left:246.30px;width:57.20px;">9,1533</div><div class="c rt" style="left:308.00px;width:57.40px;">9,7008</div><div class="c rt" style="left:369.90px;width:90.80px;">+3,82</div><div class="c rt" style="left:464.50px;width:107.70px;">-166.575.400</div><div class="c rt" style="left:575.50px;width:118.70px;">9,10</div><div class="c rt" style="left:698.70px;width:115.60px;">9,15</div><div class="c rt" style="left:818.80px;width:113.50px;">0,00</div><div class="c rt" style="left:936.80px;width:131.50px;">577.000.000</div></div>
<div class="n" style="top:447.00px;height:13.00px;"><span>148</span></div>
<div class="r b" style="top:447.00px;height:13.00px;"><div class="c l" style="left:3.10px;width:58.15px;">ULUFA</div><div class="c l g" style="left:64.85px;width:58.15px;">GUN</div><div class="c l t" style="left:126.60px;width:58.10px;">TL</div><div class="c rt" style="left:184.70px;width:57.10px;">3,76</div><div class="c rt" style="left:246.30px;width:57.20px;">3,7115</div><div class="c rt" style="left:308.00px;width:57.40px;">3,8837</div><div class="c rt" style="left:369.90px;width:90.80px;">+3,87</div><div class="c rt" style="left:464.50px;width:107.70px;">458.626.000</div><div class="c rt" style="left:575.50px;width:118.70px;">3,74</div><div class="c rt" style="left:698.70px;width:115.60px;">3,99</div><div class="c rt" style="left:818.80px;width:113.50px;">3,13</div><div class="c rt" style="left:936.80px;width:131.50px;">540.000.000</div></div>
<div class="n" style="top:460.00px;height:13.00px;"><span>149</span></div>
<div class="r a" style="top:460.00px;height:13.00px;"><div class="c l" style="left:3.10px;width:58.15px;">SASA</div><div class="c l g" style="left:64.85px;width:58.15px;">GUN</div><div class="c l t" style="left:126.60px;width:58.10px;">TL</div><div class="c rt" style="left:184.70px;width:57.10px;">2,89</div><div class="c rt" style="left:246.30px;width:57.20px;">2,8123</div><div class="c rt" style="left:308.00px;width:57.40px;">2,9947</div><div class="c rt" style="left:369.90px;width:90.80px;">+3,96</div><div class="c rt" style="left:464.50px;width:107.70px;">-10.106.100.000</div><div class="c rt" style="left:575.50px;width:118.70px;">2,86</div><div class="c rt" style="left:698.70px;width:115.60px;">2,95</div><div class="c rt" style="left:818.80px;width:113.50px;">0,00</div><div class="c rt" style="left:936.80px;width:131.50px;">43.815.615.360</div></div>
<div class="n d1" style="top:473.00px;height:13.00px;"><span>150</span></div>
<div class="r b d1" style="top:473.00px;height:13.00px;"><div class="c l" style="left:3.10px;width:58.15px;">TSKB</div><div class="c l g" style="left:64.85px;width:58.15px;">GUN</div><div class="c l t" style="left:126.60px;width:58.10px;">TL</div><div class="c rt" style="left:184.70px;width:57.10px;">12,84</div><div class="c rt" style="left:246.30px;width:57.20px;">12,6417</div><div class="c rt" style="left:308.00px;width:57.40px;">13,3323</div><div class="c rt" style="left:369.90px;width:90.80px;">+3,97</div><div class="c rt" style="left:464.50px;width:107.70px;">9.285.218.000</div><div class="c rt" style="left:575.50px;width:118.70px;">12,50</div><div class="c rt" style="left:698.70px;width:115.60px;">13,19</div><div class="c rt" style="left:818.80px;width:113.50px;">2,90</div><div class="c rt" style="left:936.80px;width:131.50px;">2.800.000.000</div></div>
<div class="n d1" style="top:486.00px;height:14.00px;"><span>151</span></div>
<div class="r a d1" style="top:486.00px;height:14.00px;"><div class="c l" style="left:3.10px;width:58.15px;">GLRYH</div><div class="c l g" style="left:64.85px;width:58.15px;">GUN</div><div class="c l t" style="left:126.60px;width:58.10px;">TL</div><div class="c rt" style="left:184.70px;width:57.10px;">3,89</div><div class="c rt" style="left:246.30px;width:57.20px;">3,8418</div><div class="c rt" style="left:308.00px;width:57.40px;">4,0551</div><div class="c rt" style="left:369.90px;width:90.80px;">+4,01</div><div class="c rt" style="left:464.50px;width:107.70px;">513.447.616</div><div class="c rt" style="left:575.50px;width:118.70px;">3,88</div><div class="c rt" style="left:698.70px;width:115.60px;">4,27</div><div class="c rt" style="left:818.80px;width:113.50px;">4,61</div><div class="c rt" style="left:936.80px;width:131.50px;">600.000.000</div></div>
<div class="n" style="top:500.00px;height:13.00px;"><span>152</span></div>
<div class="r b" style="top:500.00px;height:13.00px;"><div class="c l" style="left:3.10px;width:58.15px;">KZGYO</div><div class="c l g" style="left:64.85px;width:58.15px;">GUN</div><div class="c l t" style="left:126.60px;width:58.10px;">TL</div><div class="c rt" style="left:184.70px;width:57.10px;">24,14</div><div class="c rt" style="left:246.30px;width:57.20px;">23,689</div><div class="c rt" style="left:308.00px;width:57.40px;">24,9478</div><div class="c rt" style="left:369.90px;width:90.80px;">+4,05</div><div class="c rt" style="left:464.50px;width:107.70px;">86.466.109</div><div class="c rt" style="left:575.50px;width:118.70px;">24,00</div><div class="c rt" style="left:698.70px;width:115.60px;">23,84</div><div class="c rt" style="left:818.80px;width:113.50px;">0,00</div><div class="c rt" style="left:936.80px;width:131.50px;">200.000.000</div></div>
<div class="n" style="top:513.00px;height:13.00px;"><span>153</span></div>
<div class="r a" style="top:513.00px;height:13.00px;"><div class="c l" style="left:3.10px;width:58.15px;">TUKAS</div><div class="c l g" style="left:64.85px;width:58.15px;">GUN</div><div class="c l t" style="left:126.60px;width:58.10px;">TL</div><div class="c rt" style="left:184.70px;width:57.10px;">2,57</div><div class="c rt" style="left:246.30px;width:57.20px;">2,4834</div><div class="c rt" style="left:308.00px;width:57.40px;">2,6478</div><div class="c rt" style="left:369.90px;width:90.80px;">+4,05</div><div class="c rt" style="left:464.50px;width:107.70px;">1.096.808.104</div><div class="c rt" style="left:575.50px;width:118.70px;">2,44</div><div class="c rt" style="left:698.70px;width:115.60px;">2,55</div><div class="c rt" style="left:818.80px;width:113.50px;">7,69</div><div class="c rt" style="left:936.80px;width:131.50px;">4.500.000.000</div></div>
<div class="n" style="top:526.00px;height:13.00px;"><span>154</span></div>
<div class="r b" style="top:526.00px;height:13.00px;"><div class="c l" style="left:3.10px;width:58.15px;">BIENY</div><div class="c l g" style="left:64.85px;width:58.15px;">GUN</div><div class="c l t" style="left:126.60px;width:58.10px;">TL</div><div class="c rt" style="left:184.70px;width:57.10px;">26,10</div><div class="c rt" style="left:246.30px;width:57.20px;">25,4393</div><div class="c rt" style="left:308.00px;width:57.40px;">27,1956</div><div class="c rt" style="left:369.90px;width:90.80px;">+4,15</div><div class="c rt" style="left:464.50px;width:107.70px;">-1.649.641.000</div><div class="c rt" style="left:575.50px;width:118.70px;">25,08</div><div class="c rt" style="left:698.70px;width:115.60px;">28,98</div><div class="c rt" style="left:818.80px;width:113.50px;">0,00</div><div class="c rt" style="left:936.80px;width:131.50px;">361.000.000</div></div>
<div class="n d1" style="top:539.00px;height:14.00px;"><span>155</span></div>
<div class="r a d1" style="top:539.00px;height:14.00px;"><div class="c l" style="left:3.10px;width:58.15px;">OTTO</div><div class="c l g" style="left:64.85px;width:58.15px;">GUN</div><div class="c l t" style="left:126.60px;width:58.10px;">TL</div><div class="c rt" style="left:184.70px;width:57.10px;">489,50</div><div class="c rt" style="left:246.30px;width:57.20px;">475,3963</div><div class="c rt" style="left:308.00px;width:57.40px;">510,4825</div><div class="c rt" style="left:369.90px;width:90.80px;">+4,15</div><div class="c rt" style="left:464.50px;width:107.70px;">6.546.506</div><div class="c rt" style="left:575.50px;width:118.70px;">469,00</div><div class="c rt" style="left:698.70px;width:115.60px;">447,00</div><div class="c rt" style="left:818.80px;width:113.50px;">124,03</div><div class="c rt" style="left:936.80px;width:131.50px;">7.635.461</div></div>
<div class="n" style="top:553.00px;height:13.00px;"><span>156</span></div>
<div class="r b" style="top:553.00px;height:13.00px;"><div class="c l" style="left:3.10px;width:58.15px;">KRSTL</div><div class="c l g" style="left:64.85px;width:58.15px;">GUN</div><div class="c l t" style="left:126.60px;width:58.10px;">TL</div><div class="c rt" style="left:184.70px;width:57.10px;">9,76</div><div class="c rt" style="left:246.30px;width:57.20px;">9,5097</div><div class="c rt" style="left:308.00px;width:57.40px;">10,072</div><div class="c rt" style="left:369.90px;width:90.80px;">+4,16</div><div class="c rt" style="left:464.50px;width:107.70px;">228.089.724</div><div class="c rt" style="left:575.50px;width:118.70px;">9,56</div><div class="c rt" style="left:698.70px;width:115.60px;">10,98</div><div class="c rt" style="left:818.80px;width:113.50px;">6,18</div><div class="c rt" style="left:936.80px;width:131.50px;">192.000.000</div></div>
<div class="n" style="top:566.00px;height:13.00px;"><span>157</span></div>
<div class="r a" style="top:566.00px;height:13.00px;"><div class="c l" style="left:3.10px;width:58.15px;">ALGYO</div><div class="c l g" style="left:64.85px;width:58.15px;">GUN</div><div class="c l t" style="left:126.60px;width:58.10px;">TL</div><div class="c rt" style="left:184.70px;width:57.10px;">30,98</div><div class="c rt" style="left:246.30px;width:57.20px;">30,0524</div><div class="c rt" style="left:308.00px;width:57.40px;">32,501</div><div class="c rt" style="left:369.90px;width:90.80px;">+4,17</div><div class="c rt" style="left:464.50px;width:107.70px;">354.141.991</div><div class="c rt" style="left:575.50px;width:118.70px;">29,48</div><div class="c rt" style="left:698.70px;width:115.60px;">29,00</div><div class="c rt" style="left:818.80px;width:113.50px;">15,54</div><div class="c rt" style="left:936.80px;width:131.50px;">289.800.000</div></div>
<div class="n" style="top:579.00px;height:13.00px;"><span>158</span></div>
<div class="r b" style="top:579.00px;height:13.00px;"><div class="c l" style="left:3.10px;width:58.15px;">DGNMO</div><div class="c l g" style="left:64.85px;width:58.15px;">GUN</div><div class="c l t" style="left:126.60px;width:58.10px;">TL</div><div class="c rt" style="left:184.70px;width:57.10px;">4,99</div><div class="c rt" style="left:246.30px;width:57.20px;">4,9712</div><div class="c rt" style="left:308.00px;width:57.40px;">5,1733</div><div class="c rt" style="left:369.90px;width:90.80px;">+4,18</div><div class="c rt" style="left:464.50px;width:107.70px;">-1.779.319.000</div><div class="c rt" style="left:575.50px;width:118.70px;">4,86</div><div class="c rt" style="left:698.70px;width:115.60px;">5,60</div><div class="c rt" style="left:818.80px;width:113.50px;">0,00</div><div class="c rt" style="left:936.80px;width:131.50px;">350.000.000</div></div>
<div class="n d1" style="top:592.00px;height:13.00px;"><span>159</span></div>
<div class="r a d1" style="top:592.00px;height:13.00px;"><div class="c l" style="left:3.10px;width:58.15px;">SUMAS</div><div class="c l g" style="left:64.85px;width:58.15px;">GUN</div><div class="c l t" style="left:126.60px;width:58.10px;">TL</div><div class="c rt" style="left:184.70px;width:57.10px;">292,50</div><div class="c rt" style="left:246.30px;width:57.20px;">279,4828</div><div class="c rt" style="left:308.00px;width:57.40px;">307,5638</div><div class="c rt" style="left:369.90px;width:90.80px;">+4,19</div><div class="c rt" style="left:464.50px;width:107.70px;">-5.329.907</div><div class="c rt" style="left:575.50px;width:118.70px;">274,00</div><div class="c rt" style="left:698.70px;width:115.60px;">268,00</div><div class="c rt" style="left:818.80px;width:113.50px;">867,80</div><div class="c rt" style="left:936.80px;width:131.50px;">6.224.400</div></div>
<div class="n d1" style="top:605.00px;height:14.00px;"><span>160</span></div>
<div class="r b d1" style="top:605.00px;height:14.00px;"><div class="c l" style="left:3.10px;width:58.15px;">TAVHL</div><div class="c l g" style="left:64.85px;width:58.15px;">GUN</div><div class="c l t" style="left:126.60px;width:58.10px;">TL</div><div class="c rt" style="left:184.70px;width:57.10px;">310,75</div><div class="c rt" style="left:246.30px;width:57.20px;">300,6966</div><div class="c rt" style="left:308.00px;width:57.40px;">321,1747</div><div class="c rt" style="left:369.90px;width:90.80px;">+4,19</div><div class="c rt" style="left:464.50px;width:107.70px;">4.024.490.000</div><div class="c rt" style="left:575.50px;width:118.70px;">292,50</div><div class="c rt" style="left:698.70px;width:115.60px;">279,50</div><div class="c rt" style="left:818.80px;width:113.50px;">28,54</div><div class="c rt" style="left:936.80px;width:131.50px;">363.281.250</div></div>
<div class="n sel" style="top:619.00px;height:13.00px;"><span>161</span></div>
<div class="r sel" style="top:619.00px;height:13.00px;"><div class="c l" style="left:3.10px;width:58.15px;">OSMEN</div><div class="c l g" style="left:64.85px;width:58.15px;">GUN</div><div class="c l t" style="left:126.60px;width:58.10px;">TL</div><div class="c rt" style="left:184.70px;width:57.10px;">8,17</div><div class="c rt" style="left:246.30px;width:57.20px;">7,899</div><div class="c rt" style="left:308.00px;width:57.40px;">8,4505</div><div class="c rt" style="left:369.90px;width:90.80px;">+4,21</div><div class="c rt" style="left:464.50px;width:107.70px;">48.514.819</div><div class="c rt" style="left:575.50px;width:118.70px;">7,86</div><div class="c rt" style="left:698.70px;width:115.60px;">8,64</div><div class="c rt" style="left:818.80px;width:113.50px;">0,00</div><div class="c rt" style="left:936.80px;width:131.50px;">400.000.000</div></div>
<div class="n" style="top:632.00px;height:13.00px;"><span>162</span></div>
<div class="r b" style="top:632.00px;height:13.00px;"><div class="c l" style="left:3.10px;width:58.15px;">ISGSY</div><div class="c l g" style="left:64.85px;width:58.15px;">GUN</div><div class="c l t" style="left:126.60px;width:58.10px;">TL</div><div class="c rt" style="left:184.70px;width:57.10px;">71,05</div><div class="c rt" style="left:246.30px;width:57.20px;">70,4951</div><div class="c rt" style="left:308.00px;width:57.40px;">73,6695</div><div class="c rt" style="left:369.90px;width:90.80px;">+4,33</div><div class="c rt" style="left:464.50px;width:107.70px;">2.115.437.981</div><div class="c rt" style="left:575.50px;width:118.70px;">70,55</div><div class="c rt" style="left:698.70px;width:115.60px;">75,20</div><div class="c rt" style="left:818.80px;width:113.50px;">2,50</div><div class="c rt" style="left:936.80px;width:131.50px;">85.048.841</div></div>
<div class="n" style="top:645.00px;height:13.00px;"><span>163</span></div>
<div class="r a" style="top:645.00px;height:13.00px;"><div class="c l" style="left:3.10px;width:58.15px;">SAHOL</div><div class="c l g" style="left:64.85px;width:58.15px;">GUN</div><div class="c l t" style="left:126.60px;width:58.10px;">TL</div><div class="c rt" style="left:184.70px;width:57.10px;">87,90</div><div class="c rt" style="left:246.30px;width:57.20px;">84,5847</div><div class="c rt" style="left:308.00px;width:57.40px;">91,1764</div><div class="c rt" style="left:369.90px;width:90.80px;">+4,33</div><div class="c rt" style="left:464.50px;width:107.70px;">-788.743.000</div><div class="c rt" style="left:575.50px;width:118.70px;">84,00</div><div class="c rt" style="left:698.70px;width:115.60px;">85,65</div><div class="c rt" style="left:818.80px;width:113.50px;">0,00</div><div class="c rt" style="left:936.80px;width:131.50px;">2.100.375.969</div></div>
<div class="n d1" style="top:658.00px;height:14.00px;"><span>164</span></div>
<div class="r b d1" style="top:658.00px;height:14.00px;"><div class="c l" style="left:3.10px;width:58.15px;">DOFRB</div><div class="c l g" style="left:64.85px;width:58.15px;">GUN</div><div class="c l t" style="left:126.60px;width:58.10px;">TL</div><div class="c rt" style="left:184.70px;width:57.10px;">81,50</div><div class="c rt" style="left:246.30px;width:57.20px;">79,9719</div><div class="c rt" style="left:308.00px;width:57.40px;">86,5299</div><div class="c rt" style="left:369.90px;width:90.80px;">+4,35</div><div class="c rt" style="left:464.50px;width:107.70px;">36.930.538</div><div class="c rt" style="left:575.50px;width:118.70px;">85,80</div><div class="c rt" style="left:698.70px;width:115.60px;">74,35</div><div class="c rt" style="left:818.80px;width:113.50px;">68,72</div><div class="c rt" style="left:936.80px;width:131.50px;">155.000.000</div></div>
<div class="n" style="top:672.00px;height:13.00px;"><span>165</span></div>
<div class="r a" style="top:672.00px;height:13.00px;"><div class="c l" style="left:3.10px;width:58.15px;">BRLSM</div><div class="c l g" style="left:64.85px;width:58.15px;">GUN</div><div class="c l t" style="left:126.60px;width:58.10px;">TL</div><div class="c rt" style="left:184.70px;width:57.10px;">13,77</div><div class="c rt" style="left:246.30px;width:57.20px;">13,4403</div><div class="c rt" style="left:308.00px;width:57.40px;">14,2879</div><div class="c rt" style="left:369.90px;width:90.80px;">+4,56</div><div class="c rt" style="left:464.50px;width:107.70px;">-22.581.610</div><div class="c rt" style="left:575.50px;width:118.70px;">13,41</div><div class="c rt" style="left:698.70px;width:115.60px;">13,83</div><div class="c rt" style="left:818.80px;width:113.50px;">7,90</div><div class="c rt" style="left:936.80px;width:131.50px;">224.000.000</div></div>
<div class="n" style="top:685.00px;height:13.00px;"><span>166</span></div>
<div class="r b" style="top:685.00px;height:13.00px;"><div class="c l" style="left:3.10px;width:58.15px;">MRGYO</div><div class="c l g" style="left:64.85px;width:58.15px;">GUN</div><div class="c l t" style="left:126.60px;width:58.10px;">TL</div><div class="c rt" style="left:184.70px;width:57.10px;">2,50</div><div class="c rt" style="left:246.30px;width:57.20px;">2,4021</div><div class="c rt" style="left:308.00px;width:57.40px;">2,6199</div><div class="c rt" style="left:369.90px;width:90.80px;">+4,60</div><div class="c rt" style="left:464.50px;width:107.70px;">5.724.251</div><div class="c rt" style="left:575.50px;width:118.70px;">2,46</div><div class="c rt" style="left:698.70px;width:115.60px;">2,67</div><div class="c rt" style="left:818.80px;width:113.50px;">2,28</div><div class="c rt" style="left:936.80px;width:131.50px;">1.090.980.000</div></div>
<div class="n" style="top:698.00px;height:13.00px;"><span>167</span></div>
<div class="r a" style="top:698.00px;height:13.00px;"><div class="c l" style="left:3.10px;width:58.15px;">ENTRA</div><div class="c l g" style="left:64.85px;width:58.15px;">GUN</div><div class="c l t" style="left:126.60px;width:58.10px;">TL</div><div class="c rt" style="left:184.70px;width:57.10px;">10,67</div><div class="c rt" style="left:246.30px;width:57.20px;">10,2618</div><div class="c rt" style="left:308.00px;width:57.40px;">11,1048</div><div class="c rt" style="left:369.90px;width:90.80px;">+4,61</div><div class="c rt" style="left:464.50px;width:107.70px;">-549.178.000</div><div class="c rt" style="left:575.50px;width:118.70px;">10,30</div><div class="c rt" style="left:698.70px;width:115.60px;">10,41</div><div class="c rt" style="left:818.80px;width:113.50px;">0,00</div><div class="c rt" style="left:936.80px;width:131.50px;">1.845.000.000</div></div>
<div class="abs" style="left:72px;top:74px;width:1px;height:640px;background:#3c3c3c;"></div>
<div class="abs" style="left:1146px;top:74px;width:19px;height:640px;background:#f1f1f1;"></div>
<div class="abs" style="left:1157px;top:583px;width:2px;height:14px;background:#888;"></div>
<div class="abs" style="left:1166px;top:69px;width:6px;height:645px;background:#d8d8d8;"></div>
<div class="abs" style="left:28px;top:69px;width:6px;height:645px;background:#d8d8d8;"></div>
<div class="abs" style="left:0;top:710px;width:1200px;height:23px;background:#fff;"></div>
<div class="abs" style="left:866px;top:2px;width:170px;height:70px;background:radial-gradient(ellipse at 50% 50%,rgba(0,0,0,0.26),rgba(0,0,0,0.17) 35%,rgba(0,0,0,0.06) 58%,rgba(0,0,0,0) 72%);"></div>
<div class="abs" style="left:23px;top:0px;width:1154px;height:23px;background:#fff;"></div>
<svg class="abs" style="left:1090.500px;top:54.200px;" width="16" height="22" viewBox="-1.500 -1.500 16 22"><path d="M0 0 L0 14.300 L3.300 11.300 L5.700 16.500 L8 15.500 L5.600 10.300 L10.300 10 Z" fill="#fff" stroke="#0a0a0a" stroke-width="1.700" stroke-linejoin="miter"/></svg>
</div></body></html>
